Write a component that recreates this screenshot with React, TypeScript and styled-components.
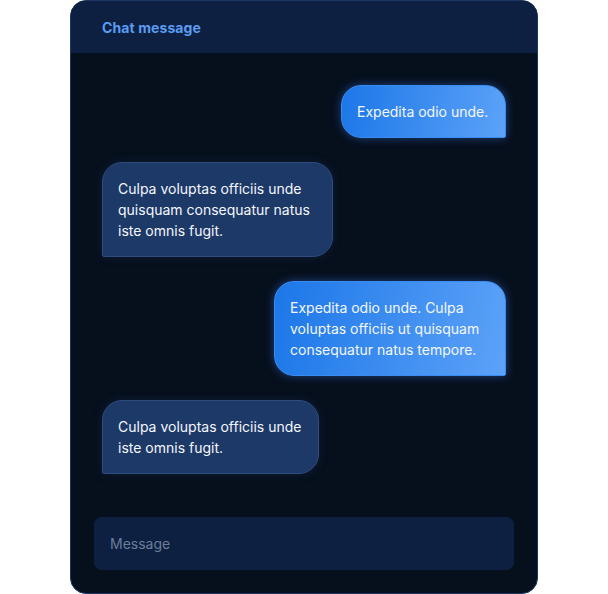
import React from "react";
import styled, { createGlobalStyle, css } from "styled-components";

const Global = createGlobalStyle`
  html, body { margin: 0; padding: 0; background: #ffffff; }
  body { font-family: Inter, "Noto Sans", sans-serif; -webkit-font-smoothing: antialiased; }
`;

const Page = styled.div`
  width: 608px;
  height: 594px;
  display: flex;
  justify-content: center;
  box-sizing: border-box;
`;

const Card = styled.div`
  width: 468px;
  height: 594px;
  box-sizing: border-box;
  border: 1px solid #1c3765;
  border-radius: 16px;
  background: #060f1c;
  overflow: hidden;
  display: flex;
  flex-direction: column;
`;

const Header = styled.div`
  height: 52px;
  flex: none;
  box-sizing: border-box;
  background: #0e2041;
  padding: 0 31px;
  display: flex;
  align-items: center;
  color: #5a9cf0;
  font-size: 14px;
  font-weight: 700;
  letter-spacing: 0.1px;
`;

const Messages = styled.div`
  flex: 1;
  display: flex;
  flex-direction: column;
  gap: 24px;
  padding: 32px 31px 0 31px;
`;

const Bubble = styled.div<{ $sent?: boolean; $width: number }>`
  width: ${(p) => p.$width}px;
  box-sizing: border-box;
  padding: 15px 15px;
  font-size: 14px;
  line-height: 21px;
  color: #f4f7fc;
  border-radius: 20px;
  ${(p) =>
    p.$sent
      ? css`
          align-self: flex-end;
          border-bottom-right-radius: 2px;
          background: linear-gradient(100deg, #1c77e8 0%, #5ca2f8 100%);
          border: 1px solid #3b8cf2;
          box-shadow: 0 0 10px rgba(59, 130, 246, 0.45);
        `
      : css`
          align-self: flex-start;
          border-bottom-left-radius: 2px;
          background: #1d3968;
          border: 1px solid #2e4c7e;
          box-shadow: 0 0 10px rgba(30, 58, 110, 0.35);
        `}
`;

const Line = styled.span`
  display: block;
  white-space: nowrap;
`;

const Footer = styled.div`
  padding: 0 23px 23px 23px;
`;

const Input = styled.input`
  width: 100%;
  height: 53px;
  box-sizing: border-box;
  border: none;
  outline: none;
  border-radius: 8px;
  background: #0e2041;
  padding: 0 16px;
  font-family: Inter, "Noto Sans", sans-serif;
  font-size: 14px;
  color: #e2e8f0;
  &::placeholder { color: #6c7d9a; }
`;

const messages: { lines: string[]; sent: boolean; width: number }[] = [
  { lines: ["Expedita odio unde."], sent: true, width: 165 },
  {
    lines: ["Culpa voluptas officiis unde", "quisquam consequatur natus", "iste omnis fugit."],
    sent: false,
    width: 231,
  },
  {
    lines: ["Expedita odio unde. Culpa", "voluptas officiis ut quisquam", "consequatur natus tempore."],
    sent: true,
    width: 232,
  },
  { lines: ["Culpa voluptas officiis unde", "iste omnis fugit."], sent: false, width: 217 },
];

export default function App() {
  return (
    <>
      <Global />
      <Page>
        <Card>
          <Header>Chat message</Header>
          <Messages>
            {messages.map((m, i) => (
              <Bubble key={i} $sent={m.sent} $width={m.width}>
                {m.lines.map((l, j) => (
                  <Line key={j}>{l}</Line>
                ))}
              </Bubble>
            ))}
          </Messages>
          <Footer>
            <Input placeholder="Message" />
          </Footer>
        </Card>
      </Page>
    </>
  );
}
